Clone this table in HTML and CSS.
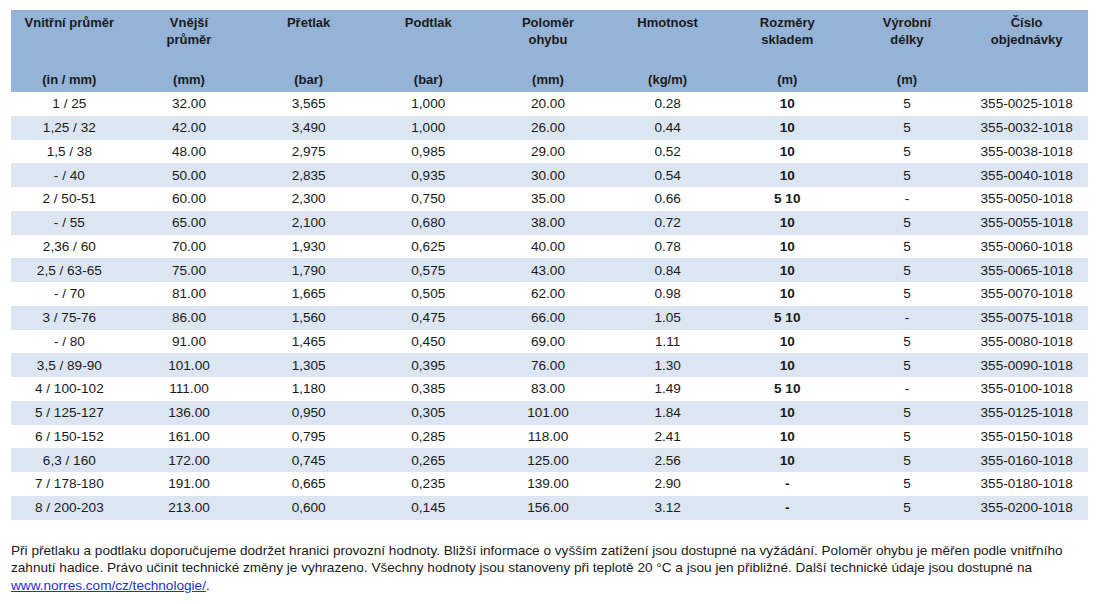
FILE: index.html
```html
<!DOCTYPE html>
<html lang="cs">
<head>
<meta charset="utf-8">
<link rel="stylesheet" href="styles.css">
</head>
<body>
<div class="page">
<table class="spec">
<thead>
<tr class="titles">
<th>Vnitřní průměr</th><th>Vnější<br>průměr</th><th>Přetlak</th><th>Podtlak</th><th>Poloměr<br>ohybu</th><th>Hmotnost</th><th>Rozměry<br>skladem</th><th>Výrobní<br>délky</th><th>Číslo<br>objednávky</th>
</tr>
<tr class="units">
<th>(in / mm)</th><th>(mm)</th><th>(bar)</th><th>(bar)</th><th>(mm)</th><th>(kg/m)</th><th>(m)</th><th>(m)</th><th></th>
</tr>
</thead>
<tbody>
<tr><td>1 / 25</td><td>32.00</td><td>3,565</td><td>1,000</td><td>20.00</td><td>0.28</td><td class="b">10</td><td>5</td><td>355-0025-1018</td></tr>
<tr><td>1,25 / 32</td><td>42.00</td><td>3,490</td><td>1,000</td><td>26.00</td><td>0.44</td><td class="b">10</td><td>5</td><td>355-0032-1018</td></tr>
<tr><td>1,5 / 38</td><td>48.00</td><td>2,975</td><td>0,985</td><td>29.00</td><td>0.52</td><td class="b">10</td><td>5</td><td>355-0038-1018</td></tr>
<tr><td>- / 40</td><td>50.00</td><td>2,835</td><td>0,935</td><td>30.00</td><td>0.54</td><td class="b">10</td><td>5</td><td>355-0040-1018</td></tr>
<tr><td>2 / 50-51</td><td>60.00</td><td>2,300</td><td>0,750</td><td>35.00</td><td>0.66</td><td class="b">5 10</td><td>-</td><td>355-0050-1018</td></tr>
<tr><td>- / 55</td><td>65.00</td><td>2,100</td><td>0,680</td><td>38.00</td><td>0.72</td><td class="b">10</td><td>5</td><td>355-0055-1018</td></tr>
<tr><td>2,36 / 60</td><td>70.00</td><td>1,930</td><td>0,625</td><td>40.00</td><td>0.78</td><td class="b">10</td><td>5</td><td>355-0060-1018</td></tr>
<tr><td>2,5 / 63-65</td><td>75.00</td><td>1,790</td><td>0,575</td><td>43.00</td><td>0.84</td><td class="b">10</td><td>5</td><td>355-0065-1018</td></tr>
<tr><td>- / 70</td><td>81.00</td><td>1,665</td><td>0,505</td><td>62.00</td><td>0.98</td><td class="b">10</td><td>5</td><td>355-0070-1018</td></tr>
<tr><td>3 / 75-76</td><td>86.00</td><td>1,560</td><td>0,475</td><td>66.00</td><td>1.05</td><td class="b">5 10</td><td>-</td><td>355-0075-1018</td></tr>
<tr><td>- / 80</td><td>91.00</td><td>1,465</td><td>0,450</td><td>69.00</td><td>1.11</td><td class="b">10</td><td>5</td><td>355-0080-1018</td></tr>
<tr><td>3,5 / 89-90</td><td>101.00</td><td>1,305</td><td>0,395</td><td>76.00</td><td>1.30</td><td class="b">10</td><td>5</td><td>355-0090-1018</td></tr>
<tr><td>4 / 100-102</td><td>111.00</td><td>1,180</td><td>0,385</td><td>83.00</td><td>1.49</td><td class="b">5 10</td><td>-</td><td>355-0100-1018</td></tr>
<tr><td>5 / 125-127</td><td>136.00</td><td>0,950</td><td>0,305</td><td>101.00</td><td>1.84</td><td class="b">10</td><td>5</td><td>355-0125-1018</td></tr>
<tr><td>6 / 150-152</td><td>161.00</td><td>0,795</td><td>0,285</td><td>118.00</td><td>2.41</td><td class="b">10</td><td>5</td><td>355-0150-1018</td></tr>
<tr><td>6,3 / 160</td><td>172.00</td><td>0,745</td><td>0,265</td><td>125.00</td><td>2.56</td><td class="b">10</td><td>5</td><td>355-0160-1018</td></tr>
<tr><td>7 / 178-180</td><td>191.00</td><td>0,665</td><td>0,235</td><td>139.00</td><td>2.90</td><td class="b">-</td><td>5</td><td>355-0180-1018</td></tr>
<tr><td>8 / 200-203</td><td>213.00</td><td>0,600</td><td>0,145</td><td>156.00</td><td>3.12</td><td class="b">-</td><td>5</td><td>355-0200-1018</td></tr>
</tbody>
</table>
<p class="note">Při přetlaku a podtlaku doporučujeme dodržet hranici provozní hodnoty. Bližší informace o vyšším zatížení jsou dostupné na vyžádání. Poloměr ohybu je měřen podle vnitřního zahnutí hadice. Právo učinit technické změny je vyhrazeno. Všechny hodnoty jsou stanoveny při teplotě 20 °C a jsou jen přibližné. Další technické údaje jsou dostupné na <a href="#">www.norres.com/cz/technologie/</a>.</p>
</div>
</body>
</html>
```

FILE: styles.css
```css
html, body {
  margin: 0;
  padding: 0;
  background: #ffffff;
}
body {
  font-family: "Liberation Sans", Arial, sans-serif;
  color: #1a1a1a;
}
.page {
  padding: 10px 11px 0 11px;
}
.spec {
  width: 1077px;
  border-collapse: collapse;
  table-layout: fixed;
  font-size: 13.6px;
}
.spec th {
  background: #95b3d7;
  font-weight: bold;
  font-size: 13px;
  text-align: center;
  color: #1a1a1a;
  padding: 0 3px 0 0;
}
.titles th {
  height: 58px;
  vertical-align: top;
  padding-top: 4px;
  line-height: 17px;
  box-sizing: border-box;
}
.units th {
  height: 24px;
  vertical-align: middle;
  line-height: 16px;
}
.spec td {
  height: 23.75px;
  padding: 1px 3px 0 0;
  box-sizing: border-box;
  text-align: center;
  vertical-align: middle;
  line-height: 16px;
}
.spec tbody tr:nth-child(even) td {
  background: #dce6f2;
}
.spec td.b {
  font-weight: bold;
}
.note {
  margin: 22px 0 0 0;
  font-size: 13.6px;
  line-height: 17.5px;
  color: #1a1a1a;
}
.note a {
  color: #1a33cc;
  text-decoration: underline;
}
```
